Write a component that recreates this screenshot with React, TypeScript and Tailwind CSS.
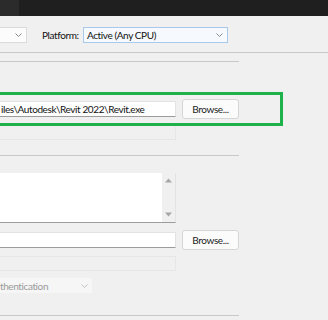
import React from 'react';

const Chevron = ({color = '#8a8a8a'}: {color?: string}) => (
    <svg width="7" height="4" viewBox="0 0 7 4" fill="none">
        <path d="M0.5 0.5 L3.5 3.5 L6.5 0.5" stroke={color} strokeWidth="1"/>
    </svg>
);

const Arrow = ({up}: {up: boolean}) => (
    <svg width="7" height="5" viewBox="0 0 7 5">
        <path d={up ? 'M3.5 0.5 L7 4.5 L0 4.5 Z' : 'M0 0.5 L7 0.5 L3.5 4.5 Z'} fill="#a6a6a6"/>
    </svg>
);

const BrowseButton = () => (
    <div className="w-[57px] h-[20px] bg-[#fbfbfb] border border-[#d6d6d6] rounded-[3px] flex items-center justify-center text-[#1b1b1b] shrink-0">
        Browse...
    </div>
);

const App: React.FC = () => {
    return (
        <div className="w-[328px] h-[320px] overflow-hidden bg-[#f0f0f0] text-[10px] tracking-[-0.4px] leading-none text-[#111]"
             style={{fontFamily: 'Lato, "Noto Sans", sans-serif'}}>
            {/* title strip */}
            <div className="h-[16px] bg-[#1f1f1f] flex">
                <div className="w-[19px] h-full bg-[#2b2b2b]"></div>
            </div>

            {/* configuration / platform row */}
            <div className="mt-[11px] h-[16px] flex items-center">
                <div className="w-[27px] h-[16px] bg-[#fcfcfc] border-y border-r border-[#dadada] flex items-center justify-end pr-[4px]">
                    <Chevron/>
                </div>
                <div className="ml-[15px] w-[41px] whitespace-nowrap">Platform:</div>
                <div className="w-[145px] h-[16px] bg-[#f6fafe] border border-[#a9c9ea] flex items-center justify-between pl-[3px] pr-[4px]">
                    <span>Active (Any CPU)</span>
                    <Chevron/>
                </div>
            </div>

            <div className="mt-[9px] h-px w-full bg-[#c9c9c9]"></div>
            <div className="mt-[8px] h-px w-[239px] bg-[#c9c9c9]"></div>

            {/* start program, highlighted */}
            <div className="mt-[30px] w-[283px] h-[34px] border-[3px] border-l-0 border-[#1fb14b] flex items-center">
                <div className="w-[176px] h-[16px] bg-white border-t border-r border-[#e3e3e3] border-b border-b-[#9c9c9c] flex items-center whitespace-nowrap">
                    <span className="ml-[1px]">iles\Autodesk\Revit 2022\Revit.exe</span>
                </div>
                <div className="ml-[6px]">
                    <BrowseButton/>
                </div>
            </div>

            <div className="mt-px w-[176px] h-[13px] border-r border-b border-[#e6e6e6]"></div>

            <div className="mt-[15px] h-px w-[239px] bg-[#c9c9c9]"></div>

            {/* arguments */}
            <div className="mt-[17px] w-[176px] h-[50px] bg-white border-r border-[#e3e3e3] border-b border-b-[#9c9c9c] flex justify-end">
                <div className="w-[13px] h-full bg-[#f0f0f0] flex flex-col items-center justify-between pt-[5px] pb-[5px]">
                    <Arrow up/>
                    <Arrow up={false}/>
                </div>
            </div>

            {/* working directory */}
            <div className="mt-[7px] h-[19px] flex items-center">
                <div className="w-[176px] h-[16px] bg-white border-t border-r border-[#e3e3e3] border-b border-b-[#9c9c9c]"></div>
                <div className="ml-[6px]">
                    <BrowseButton/>
                </div>
            </div>

            <div className="mt-[7px] w-[176px] h-[15px] border border-l-0 border-[#e6e6e6]"></div>

            {/* authentication */}
            <div className="mt-[7px] w-[92px] h-[15px] bg-[#f6f6f6] flex items-center justify-between pr-[4px] text-[#9a9a9a] whitespace-nowrap">
                <span>thentication</span>
                <Chevron color="#c2c2c2"/>
            </div>

            <div className="mt-[22px] h-px w-[239px] bg-[#c9c9c9]"></div>
        </div>
    );
};

export default App;
